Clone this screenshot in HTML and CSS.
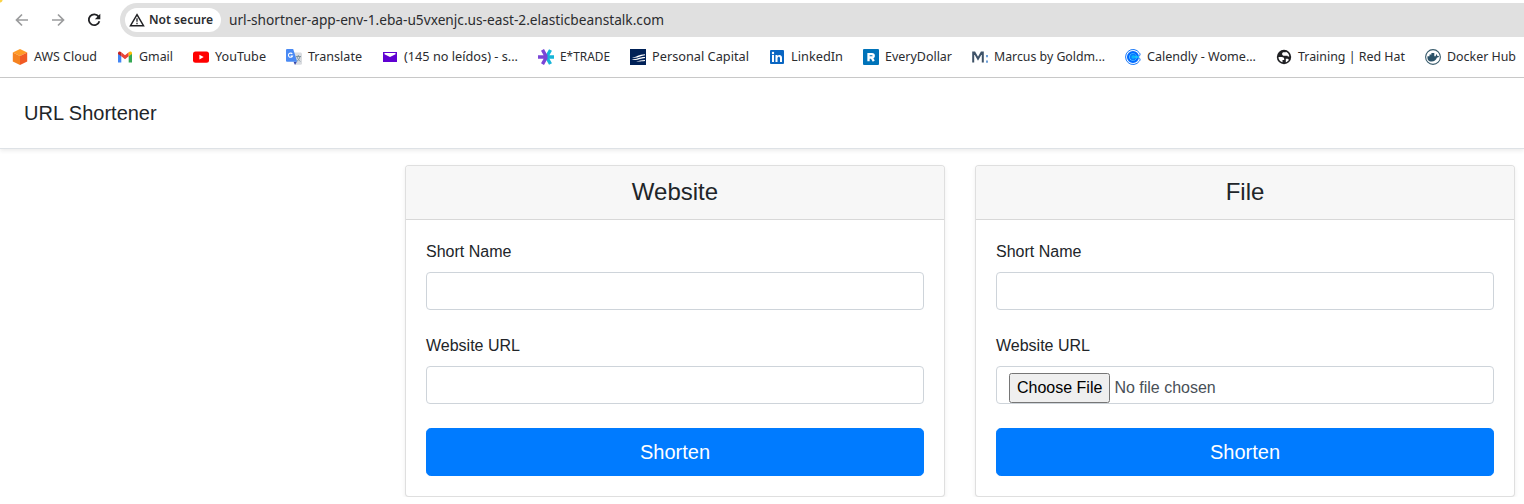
FILE: index.html
```html
<!DOCTYPE html>
<html lang="en">
<head>
<meta charset="utf-8">
<title>URL Shortener</title>
<link rel="stylesheet" href="styles.css">
</head>
<body>
<div class="browser">
  <div class="toolbar">
    <svg class="nav back" width="16" height="16" viewBox="0 0 16 16"><path d="M14 8H3M8 2.500 2.500 8 8 13.500"/></svg>
    <svg class="nav forward" width="16" height="16" viewBox="0 0 16 16"><path d="M2 8h11M8 2.500 13.500 8 8 13.500"/></svg>
    <svg class="nav reload" width="16" height="16" viewBox="0 0 16 16"><path d="M12.600 4.600A5.400 5.400 0 1 0 13.400 9.300"/><path class="solid" d="M14.300 1.800v5.400H8.900z"/></svg>
    <div class="address">
      <div class="security">
        <svg width="16" height="14" viewBox="0 0 16 14"><path d="M8 1.700 14.500 12.700H1.500z" fill="none" stroke="#202124" stroke-width="1.500"/><path d="M8 5.300v3.500M8 9.800v1.500" stroke="#202124" stroke-width="1.300"/></svg>
        <svg class="txt bold" width="66" height="20"><text x="0" y="14" textLength="64" lengthAdjust="spacingAndGlyphs">Not secure</text></svg>
      </div>
      <svg class="txt url" width="440" height="20"><text x="0" y="15" textLength="435" lengthAdjust="spacingAndGlyphs">url-shortner-app-env-1.eba-u5vxenjc.us-east-2.elasticbeanstalk.com</text></svg>
    </div>
  </div>
  <div class="bookmarks">
    <div class="bookmark"><svg width="16" height="16" viewBox="0 0 16 16"><path fill="#ff9b26" d="M8 0l7.200 3.500L8 7 .8 3.500z"/><path fill="#f58220" d="M.8 3.500 8 7v9L.8 12.500z"/><path fill="#f15a24" d="M15.200 3.500 8 7v9l7.200-3.500z"/></svg><svg class="txt" width="63" height="20"><text y="14" textLength="63" lengthAdjust="spacingAndGlyphs">AWS Cloud</text></svg></div>
    <div class="bookmark"><svg width="16" height="16" viewBox="0 0 16 16"><path fill="#4285f4" d="M1 4l3.300 2.500V13.500H1z"/><path fill="#34a853" d="M15 4l-3.300 2.500v7H15z"/><path fill="#ea4335" d="M4.300 3.300 8 6.200l3.700-2.900v4L8 10.300 4.300 7.300z"/><path fill="#c5221f" d="M1 4.500C1 2.500 3 2 4.300 3.300v4L1 5z"/><path fill="#fbbc04" d="M15 4.500c0-2-2-2.500-3.300-1.200v4L15 5z"/></svg><svg class="txt" width="34" height="20"><text y="14" textLength="34" lengthAdjust="spacingAndGlyphs">Gmail</text></svg></div>
    <div class="bookmark"><svg width="16" height="16" viewBox="0 0 16 16"><rect y="2.500" width="16" height="11.300" rx="2.500" fill="red"/><path fill="#fff" d="M6.400 5.700v4.900L10.700 8.100z"/></svg><svg class="txt" width="51" height="20"><text y="14" textLength="51" lengthAdjust="spacingAndGlyphs">YouTube</text></svg></div>
    <div class="bookmark"><svg width="16" height="16" viewBox="0 0 16 16"><path fill="#dadce0" d="M6 3.500h9l1 1V15l-1 .8H9z"/><path d="M9.800 7.500h5.200M12.300 6v1.500M14 7.500c-.5 2.500-2 4-3.200 5M11 8c.8 2 2 3.200 3.300 4.500" stroke="#78909c" stroke-width=".9" fill="none"/><path fill="#3949ab" d="M7.500 12.700h3.300L9 16z"/><path fill="#4a8af4" d="M1 0h6.200l4 12.800H1a1 1 0 0 1-1-1V1a1 1 0 0 1 1-1z"/><path d="M6.300 5A2.100 2.100 0 1 0 6.500 7H4.600" fill="none" stroke="#fff" stroke-width="1.100"/></svg><svg class="txt" width="54" height="20"><text y="14" textLength="54" lengthAdjust="spacingAndGlyphs">Translate</text></svg></div>
    <div class="bookmark"><svg width="16" height="16" viewBox="0 0 16 16"><path fill="#6001d2" d="M1 3h14v10H1z"/><path d="M2.500 4h11v1.300L8 8 2.500 5.300z" fill="#fff"/></svg><svg class="txt" width="114" height="20"><text y="14" textLength="114" lengthAdjust="spacingAndGlyphs">(145 no leídos) - s...</text></svg></div>
    <div class="bookmark"><svg width="16" height="16" viewBox="0 0 16 16" fill="none" stroke-width="3.400"><path stroke="#16b5d8" d="M8 8h8M8.500 8l4-7M8.500 8l4 7"/><path stroke="#7a45d6" d="M0 8h9M8.500 8l-4-7.200M8.500 8l-4 7.200"/></svg><svg class="txt" width="50" height="20"><text y="14" textLength="50" lengthAdjust="spacingAndGlyphs">E*TRADE</text></svg></div>
    <div class="bookmark"><svg width="16" height="16" viewBox="0 0 16 16"><path fill="#002157" d="M0 0h16v16H0z"/><path fill="#fff" d="M2 8.500C6 8.300 9 5.200 15 5.200v1C11 6.500 8 9.500 2 8.500zM1.500 10.400c5 .3 7-2.400 13.500-2.400v1c-5 .3-8 3-13.500 1.400zM6 12.200c3 .2 5-1.200 9-1.200v1c-4 .3-6 1-9 .2z"/></svg><svg class="txt" width="97" height="20"><text y="14" textLength="97" lengthAdjust="spacingAndGlyphs">Personal Capital</text></svg></div>
    <div class="bookmark"><svg width="16" height="16" viewBox="0 0 16 16"><rect x="1" y="1" width="14" height="14" rx="1" fill="#0a66c2"/><path fill="#fff" d="M3 6h2v7H3zM6.500 6h2v1c1-1.600 4.500-1.600 4.500 1.800V13h-2V9.300c0-2.200-2.500-2-2.500 0V13h-2z"/><circle cx="4" cy="4" r="1.200" fill="#fff"/></svg><svg class="txt" width="52" height="20"><text y="14" textLength="52" lengthAdjust="spacingAndGlyphs">LinkedIn</text></svg></div>
    <div class="bookmark"><svg width="16" height="16" viewBox="0 0 16 16"><rect width="16" height="16" rx="1" fill="#0073b9"/><path d="M5.500 12.200V5.200H9c2.300 0 2.300 3.300 0 3.300H6M8.500 8.500l2.300 3.700" fill="none" stroke="#fff" stroke-width="2.300"/></svg><svg class="txt" width="67" height="20"><text y="14" textLength="67" lengthAdjust="spacingAndGlyphs">EveryDollar</text></svg></div>
    <div class="bookmark"><svg width="16" height="16" viewBox="0 0 16 16"><path d="M1.200 13.500V3.500h1.300L6 9.800 9.500 3.500h1.300v10" fill="none" stroke="#3f5368" stroke-width="2"/><path fill="#6fa0d8" d="M14 6h2v2.300h-2zM14 11.500h2v2.300h-2z"/></svg><svg class="txt" width="111" height="20"><text y="14" textLength="111" lengthAdjust="spacingAndGlyphs">Marcus by Goldm...</text></svg></div>
    <div class="bookmark"><svg width="16" height="16" viewBox="0 0 16 16" fill="none"><path d="M14.300 3.800A7.500 7.500 0 1 0 14.300 12.200" stroke="#1677f8"/><path d="M14.300 3.800c1.500 1.400.6 2.700-.5 3.600v1.200c1.100.9 2 2.200.5 3.600" stroke="#1677f8"/><circle cx="8" cy="8" r="4.800" stroke="#006bff" stroke-width="2.500"/><circle cx="8" cy="8" r="3.400" fill="#0ab4fa"/><path d="M10.500 6.600A2.600 2.600 0 1 0 10.500 9.400" stroke="#0878ff" stroke-width="1.500"/><path d="M10 8h4" stroke="#17c5f5" stroke-width="1.600"/></svg><svg class="txt" width="109" height="20"><text y="14" textLength="109" lengthAdjust="spacingAndGlyphs">Calendly - Wome...</text></svg></div>
    <div class="bookmark"><svg width="16" height="16" viewBox="0 0 16 16"><circle cx="8" cy="8" r="7.200" fill="#202124"/><path fill="#fff" d="M2.500 8h3.300c1.500 0 2.400.8 2.400 2v.9H6.500v2.300C4 12.700 2.400 10.500 2.500 8zM9.800 2.800c2 .7 3.400 2.600 3.500 4.800h-.9c-.5 0-.9-.4-.9-.9H8.300c-1.300 0-2.200-.7-2.200-1.800 0-.9.700-1.600 1.600-1.600h2.100zM9.800 9.800h1.300c.9 0 1.500.6 1.700 1.100-.6 1-1.600 1.900-3 2.300z"/></svg><svg class="txt" width="107" height="20"><text y="14" textLength="107" lengthAdjust="spacingAndGlyphs">Training | Red Hat</text></svg></div>
    <div class="bookmark"><svg width="16" height="16" viewBox="0 0 16 16"><circle cx="8" cy="8" r="7.400" fill="#fff" stroke="#395b6c" stroke-width="1.100"/><path fill="#2c5268" d="M2.500 7.200h2V5.600h1.900V4h2.900v3.200h1.400l.4-1.900c.9.400 1.200 1.100 1.200 1.600h1.700c-.2 1-1 1.500-2 1.600-1 2.700-2.700 4-5.300 4-3.200 0-4.600-2-4.200-5.300z"/></svg><svg class="txt" width="69" height="20"><text y="14" textLength="69" lengthAdjust="spacingAndGlyphs">Docker Hub</text></svg></div>
  </div>
</div>
<header class="site-header"><h5>URL Shortener</h5></header>
<main class="cards">
  <section class="card">
    <div class="card-header"><h4>Website</h4></div>
    <form class="card-body">
      <label for="site-name">Short Name</label>
      <input class="field" id="site-name" type="text">
      <label for="site-url">Website URL</label>
      <input class="field" id="site-url" type="text">
      <button class="submit" type="button">Shorten</button>
    </form>
  </section>
  <section class="card">
    <div class="card-header"><h4>File</h4></div>
    <form class="card-body">
      <label for="file-name">Short Name</label>
      <input class="field" id="file-name" type="text">
      <label for="file-url">Website URL</label>
      <input class="field" id="file-url" type="file">
      <button class="submit" type="button">Shorten</button>
    </form>
  </section>
</main>
</body>
</html>
```
FILE: styles.css
```css
* { box-sizing: border-box; }
body {
  margin: 0;
  overflow: hidden;
  background: #fff;
  color: #212529;
  font: 16px/1.5 "Liberation Sans", Arial, sans-serif;
}
svg { display: block; flex: none; }
h4, h5 { margin: 0; font-weight: 400; line-height: 1.2; }
h4 { font-size: 24px; }
h5 { font-size: 20px; }

.browser {
  height: 78px;
  padding-top: 3px;
  border-bottom: 1px solid #cacaca;
  background: radial-gradient(circle at 0 0, #fbd348 0 2px, transparent 3px);
}
.toolbar { display: flex; align-items: center; height: 34px; padding-left: 14px; gap: 20px; }
.nav { fill: none; stroke: #9b9c9d; stroke-width: 1.7; }
.reload { stroke: #202124; stroke-width: 1.8; }
.reload .solid { fill: #202124; stroke: none; }
.address {
  display: flex;
  align-items: center;
  flex: 1;
  height: 34px;
  margin-left: -2px;
  padding-left: 5px;
  border-radius: 17px 0 0 17px;
  background: #e0e0e0;
}
.security {
  display: flex;
  align-items: center;
  width: 96px;
  height: 24px;
  padding-left: 4px;
  gap: 4px;
  border-radius: 12px;
  background: #fff;
}
.url { margin-left: 8px; }
.txt { overflow: visible; fill: #2b2c2f; font: 13px "Noto Sans", "Open Sans", sans-serif; }
.txt.bold { font-weight: 600; font-size: 12.5px; }
.txt.url { font-size: 14px; }
.bookmarks { display: flex; align-items: center; height: 40px; padding-left: 12px; gap: 20px; }
.bookmark { display: flex; align-items: center; gap: 6px; }

.site-header {
  display: flex;
  align-items: center;
  height: 71px;
  margin-bottom: 16px;
  padding: 0 24px;
  border-bottom: 1px solid #dee2e6;
  box-shadow: 0 2px 4px rgba(0, 0, 0, .075);
}
.cards { display: flex; gap: 30px; padding-left: 405px; }
.card {
  width: 540px;
  border: 1px solid rgba(0, 0, 0, .125);
  border-radius: 4px;
  box-shadow: 0 2px 4px rgba(0, 0, 0, .075);
  background: #fff;
}
.card-header {
  padding: 12px 20px;
  border-bottom: 1px solid rgba(0, 0, 0, .125);
  border-radius: 3px 3px 0 0;
  background: #f7f7f7;
  text-align: center;
}
.card-body { padding: 20px; }
label { display: block; margin-bottom: 8px; }
.field {
  display: block;
  width: 100%;
  height: 38px;
  margin: 0 0 24px;
  padding: 6px 12px;
  border: 1px solid #ced4da;
  border-radius: 4px;
  color: #495057;
  background: #fff;
  font: inherit;
}
.field::file-selector-button { height: 30px; }
.submit {
  display: block;
  width: 100%;
  height: 48px;
  padding: 8px 16px;
  border: 1px solid #007bff;
  border-radius: 4.8px;
  background: #007bff;
  color: #fff;
  font: 20px/1.5 "Liberation Sans", Arial, sans-serif;
}
```
